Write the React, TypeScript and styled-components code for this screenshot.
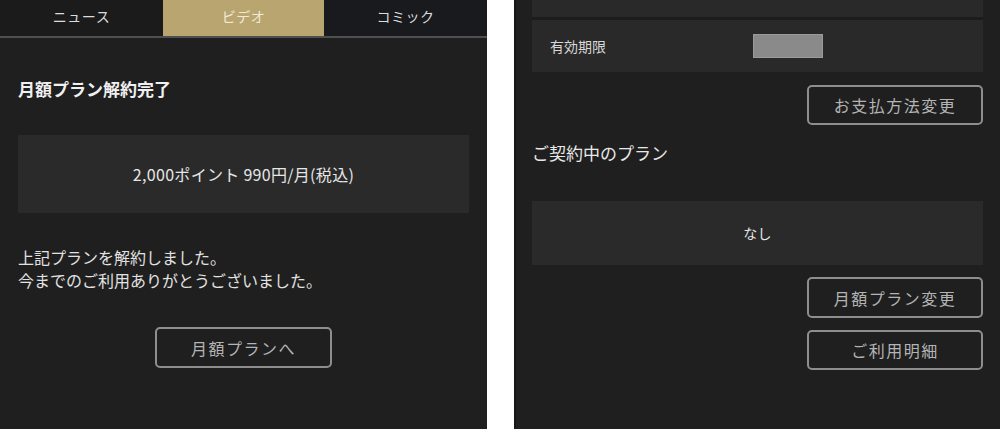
import React from "react";
import styled, { createGlobalStyle } from "styled-components";

const Global = createGlobalStyle`
  html, body { margin: 0; padding: 0; background: #ffffff; }
  body { font-family: "Noto Sans CJK JP", "Noto Sans", sans-serif; }
  * { box-sizing: border-box; }
`;

const Page = styled.div`
  display: flex;
  justify-content: space-between;
  width: 1000px;
  height: 429px;
  overflow: hidden;
  background: #ffffff;
`;

const Panel = styled.div<{ $w: number }>`
  width: ${(p) => p.$w}px;
  height: 429px;
  background: #1f1f1f;
  display: flex;
  flex-direction: column;
`;

const Tabs = styled.div`
  display: grid;
  grid-template-columns: 163px 161px 1fr;
  height: 38px;
  border-bottom: 2px solid #4f4f4f;
`;

const Tab = styled.div<{ $active?: boolean; $bg?: string }>`
  display: flex;
  align-items: center;
  justify-content: center;
  padding-bottom: 5px;
  font-size: 14px;
  letter-spacing: 0.5px;
  color: ${(p) => (p.$active ? "#f2ead6" : "#dcdcdc")};
  background: ${(p) => (p.$active ? "#b9a56f" : p.$bg || "#1b1b1b")};
`;

const Content = styled.div`
  display: flex;
  flex-direction: column;
  padding: 0 18px;
`;

const RightContent = styled.div`
  display: flex;
  flex-direction: column;
  padding: 0 17px 0 16px;
  border-left: 2px solid #171717;
  height: 100%;
`;

const Heading = styled.h1`
  margin: 39px 0 0;
  font-size: 17px;
  line-height: 24px;
  font-weight: 700;
  color: #f0f0f0;
`;

const PlanBox = styled.div<{ $h: number; $mt: number; $fs: number }>`
  margin-top: ${(p) => p.$mt}px;
  height: ${(p) => p.$h}px;
  background: #2a2a2a;
  display: flex;
  align-items: center;
  justify-content: center;
  font-size: ${(p) => p.$fs}px;
  letter-spacing: 0.3px;
  color: #e6e6e6;
`;

const Message = styled.p`
  margin: 33px 0 0;
  font-size: 16px;
  line-height: 23px;
  color: #e2e2e2;
`;

const OutlineButton = styled.button<{ $w: number; $h: number; $mt: number; $align: string }>`
  align-self: ${(p) => p.$align};
  margin-top: ${(p) => p.$mt}px;
  width: ${(p) => p.$w}px;
  height: ${(p) => p.$h}px;
  background: transparent;
  border: 2px solid #8e8e8e;
  border-radius: 5px;
  color: #b4b4b4;
  font-family: "Noto Sans CJK JP", "Noto Sans", sans-serif;
  font-size: 16px;
  letter-spacing: 1.5px;
  padding: 0;
  display: flex;
  align-items: center;
  justify-content: center;
`;

const Card = styled.div`
  display: flex;
  flex-direction: column;
  background: #1c1c1c;
  gap: 3px;
`;

const CardRow = styled.div<{ $h: number }>`
  height: ${(p) => p.$h}px;
  background: #292929;
  display: grid;
  grid-template-columns: 203px 1fr;
  align-items: center;
  padding-left: 18px;
`;

const RowLabel = styled.span`
  font-size: 14px;
  color: #d8d8d8;
`;

const Masked = styled.div`
  width: 70px;
  height: 24px;
  background: #8a8a8a;
  border: 1px solid #9a9a9a;
`;

const SubHeading = styled.h2`
  margin: 16px 0 0;
  font-size: 17px;
  line-height: 24px;
  font-weight: 400;
  color: #e8e8e8;
`;

export default function App() {
  return (
    <>
      <Global />
      <Page>
        <Panel $w={487}>
          <Tabs>
            <Tab>ニュース</Tab>
            <Tab $active>ビデオ</Tab>
            <Tab $bg="#181a1e">コミック</Tab>
          </Tabs>
          <Content>
            <Heading>月額プラン解約完了</Heading>
            <PlanBox $mt={34} $h={78} $fs={16}>
              2,000ポイント 990円/月(税込)
            </PlanBox>
            <Message>
              上記プランを解約しました。
              <br />
              今までのご利用ありがとうございました。
            </Message>
            <OutlineButton $w={177} $h={41} $mt={35} $align="center">
              月額プランへ
            </OutlineButton>
          </Content>
        </Panel>
        <Panel $w={486}>
          <RightContent>
            <Card>
              <CardRow $h={17} />
              <CardRow $h={52}>
                <RowLabel>有効期限</RowLabel>
                <Masked />
              </CardRow>
            </Card>
            <OutlineButton $w={176} $h={40} $mt={13} $align="flex-end">
              お支払方法変更
            </OutlineButton>
            <SubHeading>ご契約中のプラン</SubHeading>
            <PlanBox $mt={36} $h={64} $fs={14}>
              なし
            </PlanBox>
            <OutlineButton $w={176} $h={41} $mt={12} $align="flex-end">
              月額プラン変更
            </OutlineButton>
            <OutlineButton $w={176} $h={40} $mt={12} $align="flex-end">
              ご利用明細
            </OutlineButton>
          </RightContent>
        </Panel>
      </Page>
    </>
  );
}
